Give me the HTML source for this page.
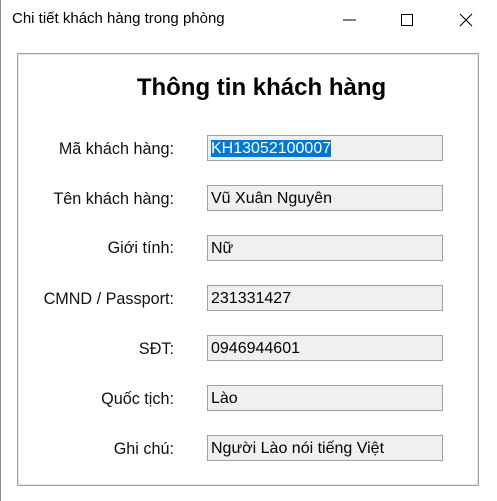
<!DOCTYPE html>
<html><head><style>
body{margin:0;width:497px;height:501px;background:#fff;position:relative;overflow:hidden;font-family:"Liberation Sans",Arial,sans-serif;}
.win{position:absolute;left:0;top:0;width:496px;height:501px;border-left:1px solid #8a8a8a;box-sizing:border-box}
.title{position:absolute;left:12px;top:10px;font-size:15px;color:#000}
.grp{position:absolute;left:17px;top:53px;width:462px;height:433px;border:1px solid #a0a0a0;box-shadow:inset 0 0 0 1px #e8e8e8;box-sizing:border-box}
h1{position:absolute;left:0;width:497px;top:74px;margin:0;text-align:center;font-size:24px;font-weight:bold;padding-left:26px;box-sizing:border-box}
.lbl{position:absolute;right:323px;font-size:16.2px;color:#111}
.fld{position:absolute;left:207px;width:236px;height:26px;background:#f0f0f0;border:1px solid #a0a0a0;box-sizing:border-box;font-size:16px;line-height:25px;padding-left:3px}
.sel{background:#0078d7;color:#fff}
</style></head><body>
<div class="win"></div>
<div class="title">Chi tiết khách hàng trong phòng</div>
<svg style="position:absolute;left:340px;top:12px" width="140" height="16">
<line x1="3" y1="8" x2="16" y2="8" stroke="#000" stroke-width="1"/>
<rect x="61.5" y="2.5" width="11" height="11" fill="none" stroke="#000"/>
<path d="M120 2 L132 14 M132 2 L120 14" stroke="#000" stroke-width="1"/>
</svg>
<div class="grp"></div>
<h1>Thông tin khách hàng</h1>
<div class="lbl" style="top:140px">Mã khách hàng:</div>
<div class="fld" style="top:135px"><span class="sel">KH13052100007</span></div>
<div class="lbl" style="top:190px">Tên khách hàng:</div>
<div class="fld" style="top:185px">Vũ Xuân Nguyên</div>
<div class="lbl" style="top:239px">Giới tính:</div>
<div class="fld" style="top:235px">Nữ</div>
<div class="lbl" style="top:290px">CMND / Passport:</div>
<div class="fld" style="top:285px">231331427</div>
<div class="lbl" style="top:340px">SĐT:</div>
<div class="fld" style="top:335px">0946944601</div>
<div class="lbl" style="top:390px">Quốc tịch:</div>
<div class="fld" style="top:385px">Lào</div>
<div class="lbl" style="top:440px">Ghi chú:</div>
<div class="fld" style="top:435px">Người Lào nói tiếng Việt</div>
</body></html>
